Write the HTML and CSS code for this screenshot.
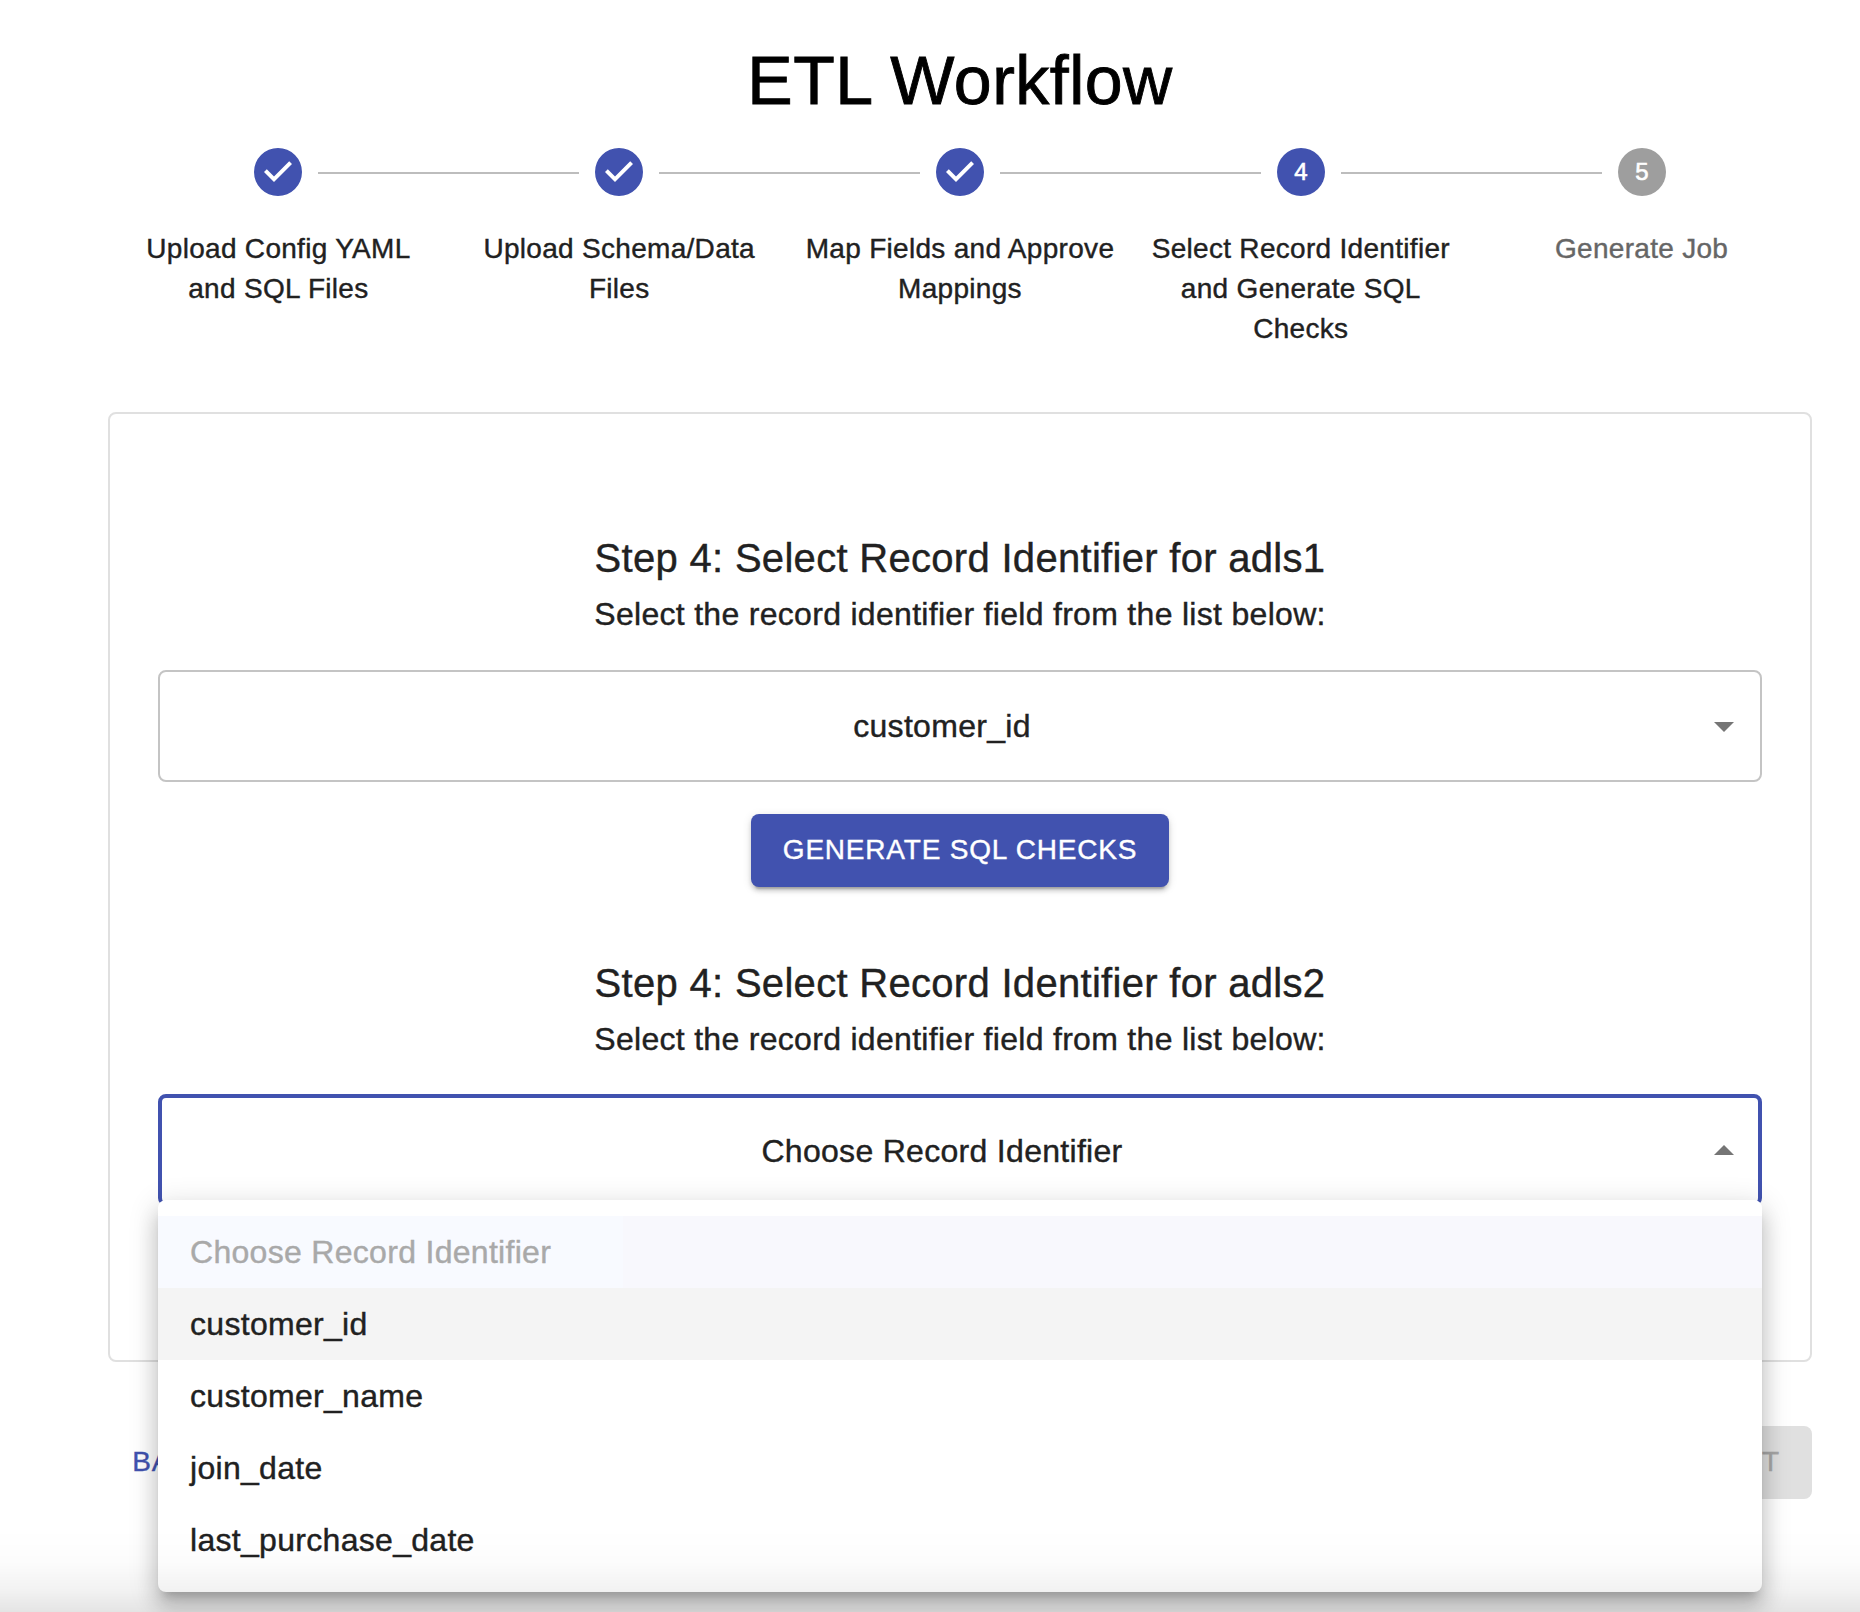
FILE: index.html
```html
<!DOCTYPE html>
<html lang="en">
<head>
<meta charset="utf-8">
<title>ETL Workflow</title>
<link rel="stylesheet" href="styles.css">
</head>
<body>
<main class="page">
  <h1 class="title">ETL Workflow</h1>

  <ol class="stepper">
    <li class="step">
      <svg class="step-icon" viewBox="0 0 24 24"><path d="M12 0a12 12 0 1 0 0 24 12 12 0 0 0 0-24zm-2 17l-5-5 1.4-1.4 3.6 3.6 7.6-7.6L19 8l-9 9z"/></svg>
      <span class="step-label">Upload Config YAML and SQL Files</span>
    </li>
    <li class="step">
      <svg class="step-icon" viewBox="0 0 24 24"><path d="M12 0a12 12 0 1 0 0 24 12 12 0 0 0 0-24zm-2 17l-5-5 1.4-1.4 3.6 3.6 7.6-7.6L19 8l-9 9z"/></svg>
      <span class="step-label">Upload Schema/Data Files</span>
    </li>
    <li class="step">
      <svg class="step-icon" viewBox="0 0 24 24"><path d="M12 0a12 12 0 1 0 0 24 12 12 0 0 0 0-24zm-2 17l-5-5 1.4-1.4 3.6 3.6 7.6-7.6L19 8l-9 9z"/></svg>
      <span class="step-label">Map Fields and Approve Mappings</span>
    </li>
    <li class="step">
      <svg class="step-icon" viewBox="0 0 24 24"><circle cx="12" cy="12" r="12"/><text class="step-number" x="12" y="16" text-anchor="middle">4</text></svg>
      <span class="step-label">Select Record Identifier and Generate SQL Checks</span>
    </li>
    <li class="step step-pending">
      <svg class="step-icon" viewBox="0 0 24 24"><circle cx="12" cy="12" r="12"/><text class="step-number" x="12" y="16" text-anchor="middle">5</text></svg>
      <span class="step-label">Generate Job</span>
    </li>
  </ol>

  <section class="panel">
    <div class="source">
      <h2 class="source-title">Step 4: Select Record Identifier for adls1</h2>
      <p class="source-hint">Select the record identifier field from the list below:</p>
      <div class="select">
        <span class="select-value">customer_id</span>
        <svg class="select-arrow" viewBox="0 0 24 24"><path d="M7 10l5 5 5-5z"/></svg>
      </div>
      <button class="button button-primary">Generate SQL Checks</button>
    </div>

    <div class="source">
      <h2 class="source-title">Step 4: Select Record Identifier for adls2</h2>
      <p class="source-hint">Select the record identifier field from the list below:</p>
      <div class="select select-open">
        <span class="select-value">Choose Record Identifier</span>
        <svg class="select-arrow" viewBox="0 0 24 24"><path d="M7 10l5 5 5-5z"/></svg>
        <ul class="menu">
          <li class="menu-item menu-item-disabled"><span>Choose Record Identifier</span></li>
          <li class="menu-item menu-item-hover">customer_id</li>
          <li class="menu-item">customer_name</li>
          <li class="menu-item">join_date</li>
          <li class="menu-item">last_purchase_date</li>
        </ul>
      </div>
      <button class="button button-primary">Generate SQL Checks</button>
    </div>
  </section>

  <footer class="actions">
    <button class="button button-text">Back</button>
    <button class="button button-disabled" disabled>Next</button>
  </footer>
</main>
<div class="bottom-shade"></div>
</body>
</html>
```

FILE: styles.css
```css
* {
  box-sizing: border-box;
}

body {
  margin: 0;
  height: 1612px;
  overflow: hidden;
  background: #fff;
  color: #212121;
  font-family: "Liberation Sans", Helvetica, Arial, sans-serif;
  font-size: 32px;
  line-height: 48px;
  letter-spacing: 0.00938em;
  -webkit-text-stroke: 0.4px currentColor;
}

h1, h2, p, ol, ul {
  margin: 0;
  padding: 0;
  font-weight: 400;
  list-style: none;
}

.page {
  width: 1704px;
  margin-left: 108px;
  padding-top: 38px;
}

.title {
  color: #000;
  font-size: 68px;
  line-height: 84px;
  letter-spacing: 0.00735em;
  text-align: center;
  -webkit-text-stroke-width: 0.9px;
}

/* Stepper */
.stepper {
  display: flex;
  padding-top: 26px;
}

.step {
  position: relative;
  flex: 1;
  display: flex;
  flex-direction: column;
  align-items: center;
  gap: 33px;
  padding: 0 16px;
}

.step + .step::before {
  content: "";
  position: absolute;
  top: 24px;
  left: calc(-50% + 40px);
  right: calc(50% + 40px);
  height: 2px;
  background: #bdbdbd;
}

.step-icon {
  width: 48px;
  height: 48px;
  fill: #4152af;
}

.step-pending .step-icon {
  fill: #9e9e9e;
}

.step-number {
  fill: #fff;
  font-size: 12px;
  letter-spacing: 0;
  -webkit-text-stroke: 0;
  stroke: #fff;
  stroke-width: 0.3px;
}

.step-label {
  font-size: 28px;
  line-height: 40px;
  letter-spacing: 0.01071em;
  text-align: center;
}

.step-pending .step-label {
  color: #666;
}

/* Panel */
.panel {
  margin-top: 63px;
  padding: 48px;
  border: 2px solid #e0e0e0;
  border-radius: 8px;
}

.source {
  display: flex;
  flex-direction: column;
  align-items: center;
  padding-top: 64px;
}

.source-title {
  font-size: 40px;
  line-height: 64px;
  letter-spacing: 0.0075em;
}

.select {
  position: relative;
  display: flex;
  align-items: center;
  align-self: stretch;
  height: 112px;
  margin: 32px 0;
  padding: 0 12px 0 26px;
  border: 2px solid #c4c4c4;
  border-radius: 8px;
}

.select-open {
  margin-top: 31px;
  margin-bottom: 33px;
  padding: 2px 10px 0 24px;
  border: 4px solid #4152af;
}

.select-value {
  flex: 1;
  padding-right: 2px;
  text-align: center;
}

.select-arrow {
  width: 48px;
  height: 48px;
  fill: #757575;
}

.select-open > .select-arrow {
  transform: rotate(180deg);
}

/* Dropdown menu */
.menu {
  position: absolute;
  z-index: 1;
  top: 102px;
  left: -4px;
  right: -4px;
  padding: 16px 0;
  background: #fff;
  border-radius: 8px;
  box-shadow:
    0 10px 10px -6px rgba(0, 0, 0, 0.2),
    0 16px 20px 2px rgba(0, 0, 0, 0.14),
    0 6px 28px 4px rgba(0, 0, 0, 0.12);
}

.menu-item {
  padding: 12px 32px;
}

.menu-item-disabled {
  background: linear-gradient(to right, #f8faff 465px, #f8f8fd 465px);
  color: #a9a9a9;
}

.menu-item-hover {
  background: #f4f4f4;
}

/* Buttons */
.button {
  height: 73px;
  min-width: 128px;
  padding: 0 32px 1px;
  border: 0;
  border-radius: 8px;
  background: none;
  font-family: inherit;
  font-size: 28px;
  line-height: 48px;
  letter-spacing: 0.02857em;
  text-transform: uppercase;
}

.button-primary {
  background: #4152af;
  color: #fff;
  box-shadow:
    0 6px 2px -4px rgba(0, 0, 0, 0.2),
    0 4px 4px 0 rgba(0, 0, 0, 0.14),
    0 2px 10px 0 rgba(0, 0, 0, 0.12);
}

.button-text {
  padding: 0 16px 1px;
  color: #4152af;
}

.button-disabled {
  background: #e0e0e0;
  color: #a6a6a6;
}

.actions {
  display: flex;
  justify-content: space-between;
  margin-top: 64px;
}

/* Fade along the lower edge of the window */
.bottom-shade {
  position: fixed;
  z-index: 2;
  left: 0;
  right: 0;
  bottom: 0;
  height: 84px;
  pointer-events: none;
  background: linear-gradient(to bottom, rgba(0, 0, 0, 0), rgba(0, 0, 0, 0.012) 40%, rgba(0, 0, 0, 0.05) 74%, rgba(0, 0, 0, 0.105));
}
```
